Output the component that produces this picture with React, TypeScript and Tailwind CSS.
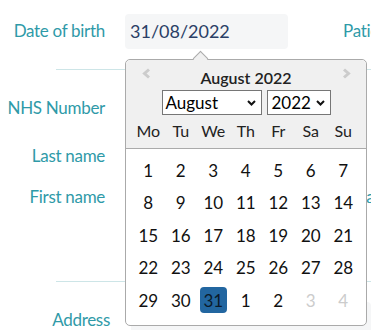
import React from "react";

const teal = "text-[#2f9aa8]";
const lbl = `text-[17px] leading-[20px] tracking-[-0.3px] whitespace-nowrap shrink-0 ${teal}`;

function Chevron({ dir }: { dir: "left" | "right" }) {
  return (
    <svg width="9" height="11" viewBox="0 0 9 11" fill="none">
      <path
        d={dir === "left" ? "M7 1.5 L2.5 5.5 L7 9.5" : "M2 1.5 L6.5 5.5 L2 9.5"}
        stroke="#cccccc"
        strokeWidth="3"
        strokeLinejoin="miter"
      />
    </svg>
  );
}

function Down() {
  return (
    <svg width="9" height="6" viewBox="0 0 9 6" fill="none">
      <path d="M1 1 L4.5 4.5 L8 1" stroke="#111" strokeWidth="2" />
    </svg>
  );
}

type Cell = { d: number; muted?: boolean; sel?: boolean };

const days: Cell[] = [
  ...Array.from({ length: 31 }, (_, i) => ({ d: i + 1, sel: i === 30 })),
  { d: 1 },
  { d: 2 },
  { d: 3, muted: true },
  { d: 4, muted: true },
];

export default function App() {
  return (
    <div
      className="relative w-[371px] h-[330px] overflow-hidden bg-white"
      style={{ fontFamily: "Lato, 'Noto Sans', sans-serif" }}
    >
      {/* Row 1 */}
      <div className="flex items-center h-[53px] pt-[9px]">
        <div className={`w-[105px] text-right ${lbl}`}>Date of birth</div>
        <div className="shrink-0 ml-[20px] w-[163px] h-[35px] rounded-[4px] bg-[#f5f6f7] flex items-center pl-[5px] text-[18px] text-[#2b3f66] leading-none">
          31/08/2022
        </div>
        <div className={`ml-[55px] ${lbl}`}>Patient ID</div>
      </div>

      <div className="ml-[56px] mt-[16px] border-t border-[#cde5e7]" />

      <div className="flex flex-col">
        <div className={`mt-[28px] w-[105px] text-right ${lbl}`}>NHS Number</div>
        <div className={`mt-[28px] w-[105px] text-right ${lbl}`}>Last name</div>
        <div className="mt-[21px] flex">
          <div className={`w-[105px] text-right ${lbl}`}>First name</div>
          <div className={`ml-[246px] ${lbl}`}>Marital status</div>
        </div>
      </div>

      <div className="ml-[56px] mt-[74px] border-t border-[#cde5e7]" />

      <div className="flex items-center mt-[20px]">
        <div className={`w-[110px] text-right ${lbl}`}>Address</div>
        <div className="ml-[21px] flex-1 h-[35px] rounded-[4px] bg-[#f5f6f7]" />
      </div>

      {/* Datepicker popup */}
      <div className="absolute left-[125px] top-[59px] w-[242px] h-[267px] border border-[#aaaaaa] rounded-[5px] bg-white text-[#111]">
        <div className="absolute left-[69px] top-[-7px] w-[11px] h-[11px] rotate-45 bg-[#f0f0f0] border-t border-l border-[#aaaaaa] z-10" />
        <div className="relative h-[89px] bg-[#f0f0f0] border-b border-[#aaaaaa] rounded-t-[5px] pt-[8px]">
          <div className="absolute left-[16px] top-[8px]">
            <Chevron dir="left" />
          </div>
          <div className="absolute left-[216px] top-[8px]">
            <Chevron dir="right" />
          </div>
          <div className="text-center text-[16px] leading-[20px] font-semibold text-[#222]">August 2022</div>
          <div className="mt-[2px] flex justify-center gap-[5px]">
            <div className="w-[100px] h-[25px] border border-[#767676] bg-white flex items-center justify-between pl-[3px] pr-[5px] text-[17px] leading-none text-black">
              <span>August</span>
              <Down />
            </div>
            <div className="w-[64px] h-[25px] border border-[#767676] bg-white flex items-center justify-between pl-[4px] pr-[5px] text-[17px] leading-none text-black">
              <span>2022</span>
              <Down />
            </div>
          </div>
          <div className="mt-[6px] px-[6px] grid grid-cols-[repeat(7,32.5px)] text-[16px] leading-[20px] text-[#222]">
            {["Mo", "Tu", "We", "Th", "Fr", "Sa", "Su"].map((n) => (
              <div key={n} className="text-center">
                {n}
              </div>
            ))}
          </div>
        </div>
        <div className="pt-[5px] px-[6px] grid grid-cols-[repeat(7,32.5px)] auto-rows-[32.5px]">
          {days.map((c, i) => (
            <div key={i} className="flex items-center justify-center">
              <div
                className={`w-[27px] h-[26px] rounded-[4px] flex items-center justify-center text-[17px] leading-none ${
                  c.sel ? "bg-[#2266a0] text-[#0a1a2a]" : c.muted ? "text-[#cccccc]" : "text-[#111]"
                }`}
              >
                {c.d}
              </div>
            </div>
          ))}
        </div>
      </div>
    </div>
  );
}
